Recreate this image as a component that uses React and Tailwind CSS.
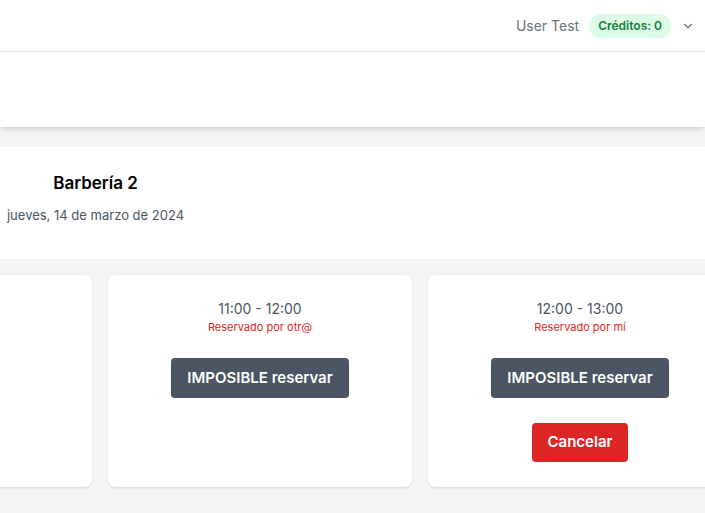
import { ChevronDown } from 'lucide-react'

const slots = [
  { time: '11:00 - 12:00', note: 'Reservado por otr@', cancel: false },
  { time: '12:00 - 13:00', note: 'Reservado por mí', cancel: true },
]

function SlotCard({ time, note, cancel }) {
  return (
    <div className="flex h-[212px] w-[304px] shrink-0 flex-col items-center rounded-lg bg-white pt-[24px] shadow-sm">
      <span className="text-sm leading-5 text-[#4b5563]">{time}</span>
      <span className="text-[11px] leading-4 text-[#dc2626]">{note}</span>
      <button className="mt-[23px] h-10 rounded bg-[#4b5563] px-4 text-[15px] font-semibold text-white">
        IMPOSIBLE reservar
      </button>
      {cancel && (
        <button className="mt-[25px] h-[39px] w-24 rounded bg-[#dc2626] text-[15px] font-semibold text-white">
          Cancelar
        </button>
      )}
    </div>
  )
}

export default function App() {
  return (
    <div className="h-[513px] w-[705px] overflow-hidden bg-gray-100 font-['Inter',sans-serif]">
      <nav className="flex h-[52px] items-center justify-end border-b border-gray-200 bg-white pr-[10px]">
        <span className="text-sm text-gray-500">User Test</span>
        <span className="ml-2.5 rounded-full bg-[#dcfce7] px-[9px] py-1 text-xs font-semibold text-[#15803d]">
          Créditos: 0
        </span>
        <ChevronDown size={14} className="ml-2.5 text-gray-500" />
      </nav>

      <div className="h-[75px] bg-white shadow-md" />

      <main className="pt-5">
        <div className="flex h-[112px] bg-white">
          <div className="flex w-[191px] flex-col items-center pt-[24px]">
            <h1 className="text-[17px] font-semibold leading-6 text-black">Barbería 2</h1>
            <p className="mt-2.5 text-[13px] leading-5 text-[#4b5563]">jueves, 14 de marzo de 2024</p>
          </div>
        </div>

        <div className="-ml-[212px] mt-4 flex gap-4">
          <div className="h-[212px] w-[304px] shrink-0 rounded-lg bg-white shadow-sm" />
          {slots.map((s) => (
            <SlotCard key={s.time} {...s} />
          ))}
        </div>
      </main>
    </div>
  )
}
